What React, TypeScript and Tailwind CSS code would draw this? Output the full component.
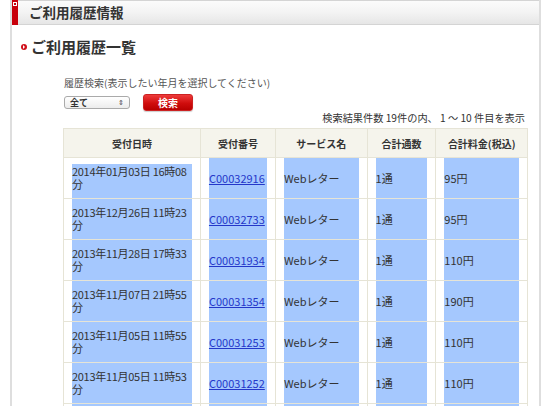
import React from "react";

const rows = [
  { d: "2014年01月03日 16時08", no: "C00032916", p: "95円" },
  { d: "2013年12月26日 11時23", no: "C00032733", p: "95円" },
  { d: "2013年11月28日 17時33", no: "C00031934", p: "110円" },
  { d: "2013年11月07日 21時55", no: "C00031354", p: "190円" },
  { d: "2013年11月05日 11時55", no: "C00031253", p: "110円" },
  { d: "2013年11月05日 11時53", no: "C00031252", p: "110円" },
  { d: "2013年11月01日 10時12", no: "C00031101", p: "110円" },
];

export default function App() {
  return (
    <div
      className="w-[550px] h-[406px] overflow-hidden bg-white text-[#333]"
      style={{ fontFamily: '"Noto Sans CJK JP", "Noto Sans", sans-serif' }}
    >
      <div className="ml-[10px] w-[531px] h-[406px] border-x-2 border-[#dedede]">
        {/* header bar */}
        <div className="h-[25px] flex border-t border-b border-[#d4d4d4] bg-[linear-gradient(to_bottom,#fbfbfb,#f3f3f3_50%,#e6e6e6)]">
          <div className="w-[6px] -mt-px h-[25px] bg-[#c8000b] relative">
            <div className="absolute left-[1px] top-[2px] w-[4px] h-[4px] border border-white bg-[#c8000b]" />
          </div>
          <div className="pl-[11px] text-[13.5px] font-bold leading-[23px]">
            ご利用履歴情報
          </div>
        </div>

        {/* heading */}
        <div className="flex items-center mt-[11px] ml-[9px] h-[22px]">
          <div className="w-[6px] h-[6px] rounded-full bg-[#d0101b] flex items-center justify-center">
            <div className="w-0 h-0 border-y-[2px] border-y-transparent border-l-[2px] border-l-white" />
          </div>
          <div className="ml-[4px] text-[15px] font-bold">ご利用履歴一覧</div>
        </div>

        {/* search */}
        <div className="ml-[52px] mt-[18px] text-[10px] text-[#555] leading-[14px]">
          履歴検索(表示したい年月を選択してください)
        </div>
        <div className="ml-[52px] mt-[4px] flex items-center h-[17px]">
          <div className="w-[66px] h-[13px] border border-[#aaa] rounded-[3px] bg-[linear-gradient(to_bottom,#fff,#ececec)] flex items-center justify-between px-[5px]">
            <span className="text-[9px] font-bold leading-none">全て</span>
            <span className="text-[7px] leading-none text-[#444]">⇕</span>
          </div>
          <div className="ml-[13px] w-[50px] h-[17px] rounded-[3px] bg-[linear-gradient(to_bottom,#ee3b3b,#d00d0d_55%,#b80000)] border border-[#c22] flex items-center justify-center text-white text-[10px] font-bold shadow-[0_1px_1px_rgba(0,0,0,0.2)]">
            検索
          </div>
        </div>

        <div className="mr-[14px] text-right text-[10.2px] leading-[14px] text-[#333]">
          検索結果件数 19件の内、 1 〜 10 件目を表示
        </div>

        {/* table */}
        <table className="ml-[51px] mt-[3px] border-collapse border border-[#e6e4d6] text-[11px]" style={{ width: 465 }}>
          <colgroup>
            <col style={{ width: 137 }} />
            <col style={{ width: 75 }} />
            <col style={{ width: 92 }} />
            <col style={{ width: 69 }} />
            <col style={{ width: 92 }} />
          </colgroup>
          <thead>
            <tr className="bg-[#f5f4ec] h-[29px]">
              {["受付日時", "受付番号", "サービス名", "合計通数", "合計料金(税込)"].map((h) => (
                <th key={h} className="border border-[#e6e4d6] text-[10px] font-bold text-[#333] p-0">
                  {h}
                </th>
              ))}
            </tr>
          </thead>
          <tbody>
            {rows.map((r, i) => (
              <tr key={r.no}>
                <td className="border border-[#e6e4d6] px-[8px] py-0 h-[41px]">
                  <div
                    className={
                      "h-[40px] flex items-center leading-[13px] whitespace-nowrap tracking-[-0.3px] " +
                      (i === 0
                        ? "bg-[linear-gradient(to_bottom,transparent_6px,#a5c8fe_6px)]"
                        : "bg-[#a5c8fe]")
                    }
                  >
                    <span>
                      {r.d}
                      <br />分
                    </span>
                  </div>
                </td>
                <td className="border border-[#e6e4d6] px-[8px] py-0">
                  <div className="h-[40px] flex items-center bg-[#a5c8fe]">
                    <a className="underline text-[#2437c9]">{r.no}</a>
                  </div>
                </td>
                <td className="border border-[#e6e4d6] px-[8px] py-0">
                  <div className="h-[40px] flex items-center bg-[#a5c8fe]">Webレター</div>
                </td>
                <td className="border border-[#e6e4d6] px-[8px] py-0">
                  <div className="h-[40px] flex items-center bg-[#a5c8fe]">1通</div>
                </td>
                <td className="border border-[#e6e4d6] px-[8px] py-0">
                  <div className="h-[40px] flex items-center bg-[#a5c8fe]">{r.p}</div>
                </td>
              </tr>
            ))}
          </tbody>
        </table>
      </div>
    </div>
  );
}
